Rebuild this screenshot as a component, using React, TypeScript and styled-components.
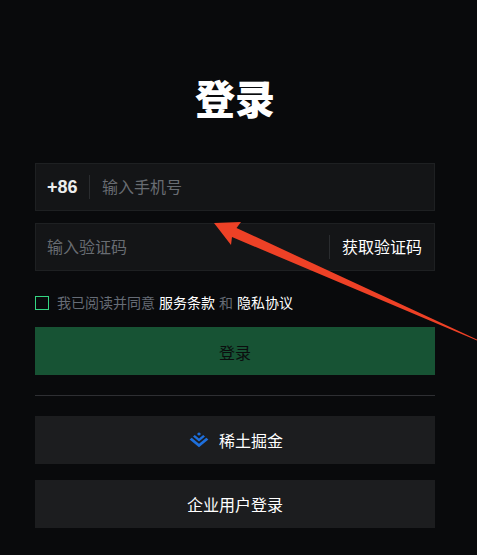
import { styled, createGlobalStyle } from "styled-components";

const GlobalStyle = createGlobalStyle`
  html, body {
    margin: 0;
    padding: 0;
    height: 100%;
    background: #090a0c;
    overflow: hidden;
  }
  body {
    font-family: "Liberation Sans", "Noto Sans CJK SC", sans-serif;
  }
`;

const App = () => {
  return (
    <Page>
      <GlobalStyle />
      <Title>登录</Title>
      <Form>
        <Field>
          <AreaCode>+86</AreaCode>
          <Separator />
          <Placeholder>输入手机号</Placeholder>
        </Field>
        <Field>
          <Placeholder>输入验证码</Placeholder>
          <CodeAction>
            <Separator />
            <CodeButton>获取验证码</CodeButton>
          </CodeAction>
        </Field>
        <Agreement>
          <CheckBox />
          <AgreementText>我已阅读并同意</AgreementText>
          <AgreementLink>服务条款</AgreementLink>
          <AgreementText>和</AgreementText>
          <AgreementLink>隐私协议</AgreementLink>
        </Agreement>
        <LoginButton>登录</LoginButton>
        <Divider />
        <DarkButton $first>
          <svg width="20" height="16" viewBox="0 0 20 16" fill="#1e6fdc">
            <path d="M10 0.2 L12.1 2 L10 3.8 L7.9 2 Z" />
            <path d="M10 6.4 L14.2 3 L16 4.5 L10 9.4 L4 4.5 L5.8 3 Z" />
            <path d="M10 11.8 L17.3 5.8 L19.4 7.5 L10 15.2 L0.6 7.5 L2.7 5.8 Z" />
          </svg>
          <span>稀土掘金</span>
        </DarkButton>
        <DarkButton>企业用户登录</DarkButton>
      </Form>
      <Arrow width="477" height="555" viewBox="0 0 477 555">
        <path
          d="M214 223 L241 222 L236.5 228 L477 339.5 L477 340.5 L232 237 L231 245 Z"
          fill="#ee4126"
        />
      </Arrow>
    </Page>
  );
};

const Page = styled.div`
  position: relative;
  box-sizing: border-box;
  width: 477px;
  height: 555px;
  padding: 0 42px 0 35px;
  background: #090a0c;
  overflow: hidden;
`;

const Title = styled.h1`
  margin: 0;
  padding-top: 72px;
  height: 91px;
  line-height: 56px;
  font-size: 40px;
  font-weight: 900;
  text-align: center;
  color: #fff;
`;

const Form = styled.div`
  display: flex;
  flex-direction: column;
`;

const Field = styled.div`
  box-sizing: border-box;
  display: flex;
  align-items: center;
  height: 48px;
  margin-bottom: 12px;
  padding: 0 12px 0 11px;
  background: #141517;
  border: 1px solid #1e2022;
`;

const AreaCode = styled.span`
  width: 30px;
  font-size: 18px;
  font-weight: 700;
  color: #eceded;
`;

const Separator = styled.div`
  flex: none;
  width: 1px;
  height: 24px;
  margin: 0 12px;
  background: #2a2c2f;
`;

const Placeholder = styled.span`
  padding-bottom: 2px;
  font-size: 16px;
  color: #686c72;
`;

const CodeAction = styled.div`
  display: flex;
  align-items: center;
  margin-left: auto;
`;

const CodeButton = styled.span`
  padding-bottom: 2px;
  font-size: 16px;
  color: #fff;
`;

const Agreement = styled.div`
  display: flex;
  align-items: center;
  gap: 4px;
  height: 16px;
  margin-top: 12px;
  font-size: 14px;
  color: #666c76;
`;

const AgreementText = styled.span`
  padding-bottom: 2px;
`;

const CheckBox = styled.div`
  box-sizing: border-box;
  width: 14px;
  height: 14px;
  margin-right: 4px;
  border: 1px solid #34d582;
`;

const AgreementLink = styled.span`
  padding-bottom: 2px;
  color: #fff;
`;

const LoginButton = styled.div`
  box-sizing: border-box;
  display: flex;
  align-items: center;
  justify-content: center;
  height: 48px;
  margin-top: 16px;
  padding-top: 2px;
  background: #175334;
  font-size: 16px;
  color: #0b0d0e;
`;

const Divider = styled.div`
  height: 1px;
  margin: 20px 0;
  background: #2e2f33;
`;

const DarkButton = styled.div<{ $first?: boolean }>`
  display: flex;
  align-items: center;
  justify-content: center;
  gap: 10px;
  height: 48px;
  margin-bottom: ${(p) => (p.$first ? "16px" : "0")};
  padding-left: ${(p) => (p.$first ? "2px" : "0")};
  background: #1c1d1f;
  font-size: 16px;
  color: #fff;
`;

const Arrow = styled.svg`
  position: absolute;
  top: 0;
  left: 0;
  pointer-events: none;
`;

export default App;
